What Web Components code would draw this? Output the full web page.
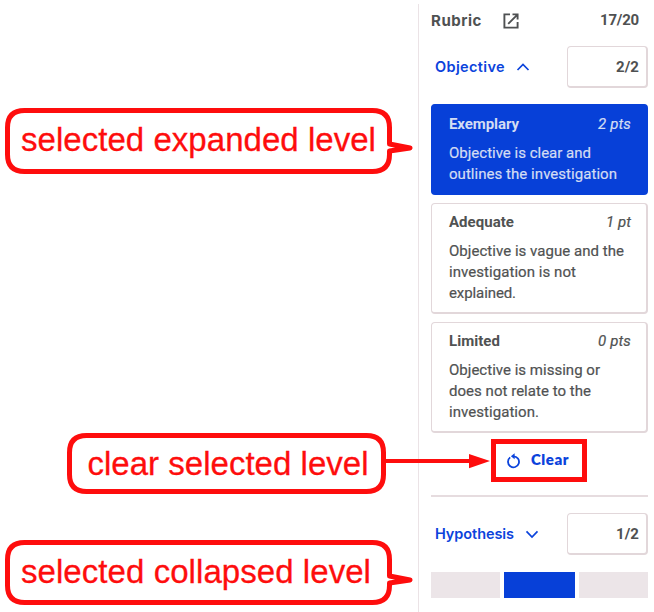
<!DOCTYPE html>
<html lang="en">
<head>
<meta charset="utf-8">
<title>Rubric</title>
<style>
html,body{margin:0;background:#fff}
body{width:654px;height:612px;overflow:hidden;position:relative;font-family:Roboto,"Liberation Sans",sans-serif;color:#505252}
</style>
</head>
<body>
<rubric-panel>
  <rubric-header></rubric-header>
  <criterion-row name="Objective" w="70" score="2/2" sw="23" open></criterion-row>
  <level-list>
    <level-card selected name="Exemplary" nw="70" pts="2 pts" pw="33" lines="Objective is clear and:142|outlines the investigation:168"></level-card>
    <level-card name="Adequate" nw="65" pts="1 pt" pw="25" lines="Objective is vague and the:175|investigation is not:127|explained.:67"></level-card>
    <level-card name="Limited" nw="51" pts="0 pts" pw="33" lines="Objective is missing or:151|does not relate to the:142|investigation.:90"></level-card>
  </level-list>
  <clear-button></clear-button>
  <criterion-row class="second" name="Hypothesis" w="79" score="1/2" sw="23"></criterion-row>
  <level-bars></level-bars>
</rubric-panel>
<call-out style="left:5px;top:108px" w="387" h="66" tail="40" tw="355" tx="16" base="43">selected expanded level</call-out>
<call-out style="left:67px;top:433px" w="319" h="61" tw="281" tx="20.5" base="42">clear selected level</call-out>
<call-out style="left:5px;top:540px" w="387" h="65" tail="40" tw="350" tx="16" base="43">selected collapsed level</call-out>
<link-arrow></link-arrow>

<script>
const define = (tag, render) => customElements.define(tag, class extends HTMLElement {
  connectedCallback() {
    if (this.shadowRoot) return;
    this.attachShadow({ mode: 'open' }).innerHTML = render(this);
  }
});

/* Single line of text, tracked so that it spans the given width. */
customElements.define('tracked-text', class extends HTMLElement {
  connectedCallback() {
    if (this.shadowRoot) return;
    this.attachShadow({ mode: 'open' }).innerHTML =
      '<style>:host{display:block;white-space:nowrap}span{display:inline-block}</style><span><slot></slot></span>';
    const span = this.shadowRoot.querySelector('span');
    const w = +this.getAttribute('w'), n = this.textContent.length;
    const gap = (w - span.getBoundingClientRect().width) / n;
    span.style.letterSpacing = gap.toFixed(3) + 'px';
  }
});

define('rubric-panel', () => `<style>
:host{display:flex;flex-direction:column;box-sizing:border-box;margin-left:418px;width:236px;height:612px;padding:5px 6px 0 12px;
border-left:1px solid #ebe3e6;border-image:linear-gradient(#fff 5px,#ebe3e6 5px) 1}</style><slot></slot>`);

define('rubric-header', () => `<style>
:host{display:flex;align-items:center;height:31px;font:700 15px/31px Inter,sans-serif;color:#4f5152}
svg{margin-left:20px}.s{margin-left:auto;margin-right:9px;font:700 15px/31px Roboto,sans-serif}</style>
<tracked-text w="51">Rubric</tracked-text>
<svg width="18" height="18" viewBox="0 0 18 18" fill="none" stroke="#4f5152" stroke-width="1.9"><path d="M8 2.4H2.4v13.2h13.2V10M10.5 2.4h5.1v5.1M15.2 2.8 6.2 11.8"/></svg>
<tracked-text class="s" w="39">17/20</tracked-text>`);

define('criterion-row', el => `<style>
:host{display:flex;align-items:center;height:42px;margin-top:10px;padding-left:4px;color:#0b43dc}
:host(.second){margin-top:0}
.n{font:600 14.5px/20px Inter,sans-serif;padding-bottom:1px}
svg{margin-left:11px}
.box{box-sizing:border-box;margin-left:auto;width:81px;height:42px;border:solid #e2d7da;border-width:1px 2px 2px 1px;border-radius:4px;display:flex;align-items:center;justify-content:flex-end;padding-right:7px;color:#4f5152;font:700 15px/20px Roboto,sans-serif}</style>
<tracked-text class="n" w="${el.getAttribute('w')}">${el.getAttribute('name')}</tracked-text>
<svg width="14" height="10" viewBox="0 0 14 10" fill="none" stroke="#0b43dc" stroke-width="1.7"><path d="${el.hasAttribute('open') ? 'M1.5 8 7 2.4 12.5 8' : 'M1.5 2.4 7 8 12.5 2.4'}"/></svg>
<div class="box"><tracked-text w="${el.getAttribute('sw')}">${el.getAttribute('score')}</tracked-text></div>`);

define('level-list', () => `<style>:host{display:flex;flex-direction:column;gap:8px;margin-top:16px}</style><slot></slot>`);

define('level-card', el => `<style>
:host{display:block;box-sizing:border-box;height:111px;border:solid #e2d7da;border-width:1px 2px 2px 1px;border-radius:4px;padding:8px 15px 0 17px;font-size:15px;line-height:21px;-webkit-text-stroke:.2px currentColor}
:host([selected]){background:#0740d8;border-color:#0740d8;color:#d3dcf3;height:91px;padding-top:9px}
.top{display:flex;justify-content:space-between;margin-bottom:8px}
b{font-weight:700;-webkit-text-stroke:0}</style>
<div class="top"><b><tracked-text w="${el.getAttribute('nw')}">${el.getAttribute('name')}</tracked-text></b><i><tracked-text w="${el.getAttribute('pw')}">${el.getAttribute('pts')}</tracked-text></i></div>
${el.getAttribute('lines').split('|').map(l => l.split(':')).map(([t, w]) => `<tracked-text w="${w}">${t}</tracked-text>`).join('')}`);

define('clear-button', () => `<style>
:host{display:flex;flex-direction:column;align-items:flex-start;height:80px;padding-top:6px;box-sizing:border-box;color:#0b43dc}
.b{display:flex;align-items:center;box-sizing:border-box;margin-left:60px;width:96px;height:43px;border:5px solid #fe0d0d;padding-left:10px;font:800 15px/20px Lato,sans-serif}
svg{margin-right:10px}
.b tracked-text{margin-bottom:3px}
.line{align-self:stretch;height:2px;margin-top:13px;background:#e6dcdf}</style>
<div class="b"><svg width="15" height="16" viewBox="0 0 15 16" fill="none" stroke="#0b43dc" stroke-width="1.8"><path d="M4.2 4.4A5.5 5.5 0 1 0 7.5 3.3"/><path d="M8.6.2v6L4.9 3.2z" fill="#0b43dc" stroke="none"/></svg><tracked-text w="38">Clear</tracked-text></div>
<div class="line"></div>`);

define('level-bars', () => `<style>
:host{display:grid;grid-template-columns:69px 71px 69px;column-gap:4px;height:26px;margin-top:17px}
div{background:#ece5e8}.on{background:#0740d8}</style><div></div><div class="on"></div><div></div>`);

define('call-out', el => {
  const w = +el.getAttribute('w'), h = +el.getAttribute('h'), t = +el.getAttribute('tail');
  const r = 17, a = 2.5, R = w - a, B = h - a;
  const tail = t ? `V${t - 4}L${w + 18} ${t}L${R} ${t + 3}` : '';
  return `<style>
:host{position:absolute;display:block;width:${w}px;height:${h}px;color:#fe0d0d;font:33px/40px "Liberation Sans",Arial,sans-serif;-webkit-text-stroke:.3px #fe0d0d}
svg{position:absolute;left:0;top:0;overflow:visible}
.t{position:relative;padding-left:${el.getAttribute('tx')}px;padding-top:${el.getAttribute('base') - 31}px}</style>
<svg width="${w}" height="${h}" fill="#fff" stroke="#fe0d0d" stroke-width="5" stroke-linejoin="round"><path d="M${a + r} ${a}H${R - r}Q${R} ${a} ${R} ${a + r}${tail}V${B - r}Q${R} ${B} ${R - r} ${B}H${a + r}Q${a} ${B} ${a} ${B - r}V${a + r}Q${a} ${a} ${a + r} ${a}Z"/></svg>
<div class="t"><tracked-text w="${el.getAttribute('tw')}">${el.textContent}</tracked-text></div>`;
});

define('link-arrow', () => `<style>:host{position:absolute;display:block;left:384px;top:453px}svg{display:block}</style>
<svg width="108" height="16" fill="#fe0d0d"><path d="M0 6H85V1L106 8 85 15.2V10H0z"/></svg>`);
</script>
</body>
</html>
